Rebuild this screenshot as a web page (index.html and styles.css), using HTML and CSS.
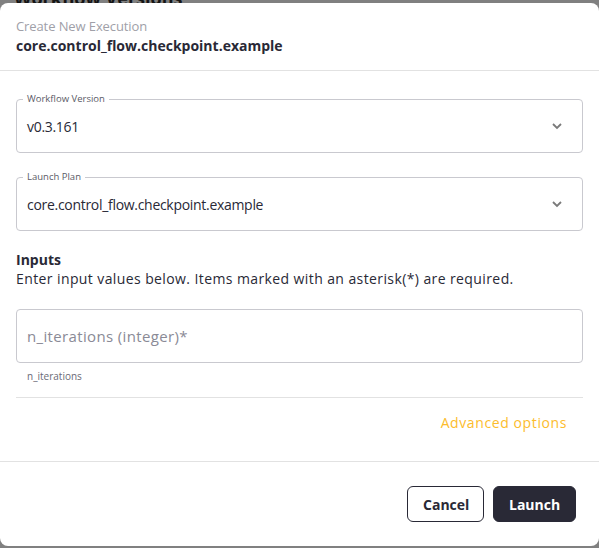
FILE: index.html
```html
<!DOCTYPE html>
<html>
<head>
<meta charset="utf-8">
<link rel="stylesheet" href="styles.css">
</head>
<body>
<div class="backdrop-title">Workflow Versions</div>
<div class="dialog">
  <header class="dlg-header">
    <div class="subtitle">Create New Execution</div>
    <div class="title">core.control_flow.checkpoint.example</div>
  </header>
  <div class="dlg-body">
    <div class="select">
      <span class="legend">Workflow Version</span>
      <span class="value">v0.3.161</span>
      <svg class="chev" width="14" height="14" viewBox="0 0 14 14"><path d="M3 5l4 4 4-4" fill="none" stroke="#7a7a7a" stroke-width="1.8"/></svg>
    </div>
    <div class="select select-last">
      <span class="legend">Launch Plan</span>
      <span class="value">core.control_flow.checkpoint.example</span>
      <svg class="chev" width="14" height="14" viewBox="0 0 14 14"><path d="M3 5l4 4 4-4" fill="none" stroke="#7a7a7a" stroke-width="1.8"/></svg>
    </div>
    <div class="inputs">
      <div class="inputs-title">Inputs</div>
      <div class="inputs-desc">Enter input values below. Items marked with an asterisk(*) are required.</div>
    </div>
    <div class="field">
      <div class="textbox"><span class="placeholder">n_iterations (integer)*</span></div>
      <div class="helper">n_iterations</div>
    </div>
    <div class="adv-row">
      <span class="adv">Advanced options</span>
    </div>
  </div>
  <footer class="dlg-footer">
    <button class="btn btn-cancel">Cancel</button>
    <button class="btn btn-launch">Launch</button>
  </footer>
</div>
</body>
</html>
```
FILE: styles.css
```css
* { box-sizing: border-box; }
html, body { margin: 0; padding: 0; }
body {
  background: #808080;
  width: 599px;
  height: 548px;
  overflow: hidden;
  position: relative;
  font-family: "Open Sans", "Liberation Sans", sans-serif;
  color: #292936;
}
.backdrop-title {
  position: absolute;
  left: 14px;
  top: -14px;
  font-size: 18px;
  font-weight: 700;
  color: #141414;
}
.dialog {
  position: relative;
  margin-top: 3px;
  height: 543px;
  background: #fff;
  border-radius: 8px;
  display: flex;
  flex-direction: column;
}
.dlg-header {
  padding: 15px 16px 0 16px;
  height: 68px;
  border-bottom: 1px solid #e2e2e2;
}
.subtitle {
  font-size: 13px;
  color: #a0a0a8;
  line-height: 17px;
  letter-spacing: -0.1px;
}
.title {
  font-size: 14px;
  font-weight: 700;
  line-height: 20px;
  margin-top: 1px;
}
.dlg-body {
  padding: 28px 16px 0 16px;
  display: flex;
  flex-direction: column;
  height: 391px;
  border-bottom: 1px solid #e2e2e2;
}
.select {
  position: relative;
  height: 54px;
  border: 1px solid #c9c9cf;
  border-radius: 4px;
  display: flex;
  align-items: center;
  padding: 0 0 0 10px;
  margin-bottom: 24px;
}
.select-last { margin-bottom: 19px; }
.legend {
  position: absolute;
  left: 6px;
  top: -8px;
  padding: 0 4px;
  background: #fff;
  font-size: 9.5px;
  color: #5a5a66;
  line-height: 14px;
}
.value {
  font-size: 14px;
  letter-spacing: -0.3px;
  color: #292936;
  flex: 1;
}
.chev { margin-right: 18px; }
.inputs-title {
  font-size: 14px;
  font-weight: 700;
  line-height: 19px;
}
.inputs-desc {
  font-size: 14px;
  line-height: 19px;
  letter-spacing: 0.4px;
}
.field { margin-top: 21px; }
.textbox {
  height: 54px;
  border: 1px solid #c9c9cf;
  border-radius: 4px;
  display: flex;
  align-items: center;
  padding-left: 10px;
}
.placeholder {
  font-size: 15px;
  letter-spacing: 0.35px;
  color: #8a8a96;
}
.helper {
  font-size: 10px;
  color: #6a6a76;
  padding-left: 11px;
  margin-top: 6px;
  line-height: 15px;
  padding-bottom: 13px;
  border-bottom: 1px solid #e2e2e2;
}
.adv-row {
  display: flex;
  justify-content: flex-end;
  padding: 15px 16px 0 0;
}
.adv {
  font-size: 14px;
  letter-spacing: 0.6px;
  color: #fcbc2c;
}
.dlg-footer {
  display: flex;
  justify-content: flex-end;
  gap: 9px;
  padding: 24px 23px 0 0;
}
.btn {
  height: 36px;
  border-radius: 6px;
  font-family: "Open Sans", "Liberation Sans", sans-serif;
  font-size: 14px;
  font-weight: 700;
  padding: 0 15px;
  cursor: pointer;
}
.btn-cancel {
  background: #fff;
  border: 1px solid #292936;
  color: #292936;
  width: 77px;
}
.btn-launch {
  background: #292936;
  border: 1px solid #292936;
  color: #fff;
  width: 83px;
}
```
